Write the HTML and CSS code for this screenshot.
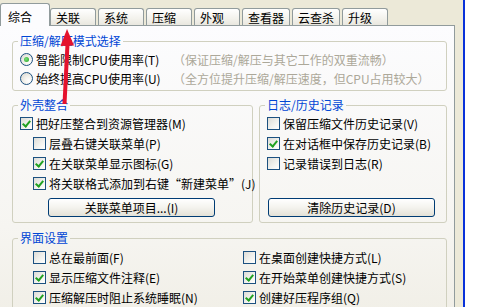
FILE: index.html
```html
<!DOCTYPE html>
<html>
<head>
<meta charset="utf-8">
<link rel="stylesheet" href="styles.css">
</head>
<body>
<div class="screen">
  <div class="dialog">
    <div class="tabs">
      <div class="tab active">综合</div>
      <div class="tab">关联</div>
      <div class="tab">系统</div>
      <div class="tab">压缩</div>
      <div class="tab">外观</div>
      <div class="tab">查看器</div>
      <div class="tab">云查杀</div>
      <div class="tab">升级</div>
    </div>
    <div class="panel">
      <fieldset class="group g-mode">
        <legend>压缩/解压模式选择</legend>
        <div class="row">
          <span class="radio on"></span><span class="rlabel">智能限制CPU使用率(T)</span><span class="hint">（保证压缩/解压与其它工作的双重流畅）</span>
        </div>
        <div class="row">
          <span class="radio"></span><span class="rlabel">始终提高CPU使用率(U)</span><span class="hint">（全方位提升压缩/解压速度，但CPU占用较大）</span>
        </div>
      </fieldset>

      <div class="two-col">
        <fieldset class="group g-shell">
          <legend>外壳整合</legend>
          <div class="row"><span class="cb on"></span><span>把好压整合到资源管理器(M)</span></div>
          <div class="row sub"><span class="cb"></span><span>层叠右键关联菜单(P)</span></div>
          <div class="row sub"><span class="cb on"></span><span>在关联菜单显示图标(G)</span></div>
          <div class="row sub"><span class="cb on"></span><span>将关联格式添加到右键“新建菜单”(J)</span></div>
          <div class="btn btn-left">关联菜单项目...(I)</div>
        </fieldset>
        <fieldset class="group g-log">
          <legend>日志/历史记录</legend>
          <div class="row"><span class="cb"></span><span>保留压缩文件历史记录(V)</span></div>
          <div class="row"><span class="cb on"></span><span>在对话框中保存历史记录(B)</span></div>
          <div class="row"><span class="cb"></span><span>记录错误到日志(R)</span></div>
          <div class="btn btn-right">清除历史记录(D)</div>
        </fieldset>
      </div>

      <fieldset class="group g-ui">
        <legend>界面设置</legend>
        <div class="ui-grid">
          <div class="row"><span class="cb"></span><span>总在最前面(F)</span></div>
          <div class="row"><span class="cb"></span><span>在桌面创建快捷方式(L)</span></div>
          <div class="row"><span class="cb on"></span><span>显示压缩文件注释(E)</span></div>
          <div class="row"><span class="cb on"></span><span>在开始菜单创建快捷方式(S)</span></div>
          <div class="row"><span class="cb on"></span><span>压缩解压时阻止系统睡眠(N)</span></div>
          <div class="row"><span class="cb on"></span><span>创建好压程序组(Q)</span></div>
        </div>
      </fieldset>
    </div>
  </div>
  <div class="frame"></div>
  <div class="outside"></div>
</div>
<svg class="arrow" width="495" height="307" viewBox="0 0 495 307">
  <line x1="64.5" y1="104" x2="67.5" y2="44" stroke="#E5122D" stroke-width="4"/>
  <polygon points="67,29 60.5,46 74,45.5" fill="#E5122D"/>
</svg>
</body>
</html>
```

FILE: styles.css
```css
* { box-sizing: border-box; }
html, body {
  margin: 0;
  padding: 0;
  width: 495px;
  height: 307px;
  overflow: hidden;
  background: #ECE9D8;
  font-family: "Noto Sans CJK SC", "Liberation Sans", sans-serif;
  font-size: 12px;
  color: #000;
}
.screen {
  display: flex;
  width: 495px;
  height: 307px;
}
.dialog {
  width: 463px;
  flex: none;
  background: #ECE9D8;
  padding-top: 3px;
}
.frame {
  width: 2px;
  flex: none;
  background: #0831D9;
}
.outside {
  flex: 1;
  background: #FFFFFF;
}

/* tabs */
.tabs {
  display: flex;
  align-items: flex-end;
  height: 22px;
  padding-left: 2px;
  gap: 2px;
}
.tab {
  min-width: 46px;
  height: 17px;
  padding: 1px 5px 0;
  line-height: 15px;
  border: 1px solid #919B9C;
  border-bottom: none;
  border-radius: 3px 3px 0 0;
  background: linear-gradient(#FFFFFF, #F3F2EC 60%, #E9E7DF);
  white-space: nowrap;
}
.tab.active {
  position: relative;
  z-index: 2;
  min-width: 50px;
  height: 23px;
  margin: 0 -2px -1px -2px;
  padding: 5px 7px 0;
  border-top: 1px solid #919B9C;
  background: #FCFCFE;
}

/* panel */
.panel {
  margin-left: -1px;
  width: 456px;
  height: 290px;
  border: 1px solid #919B9C;
  background: linear-gradient(#FCFCFE, #F6F5F1 70%, #F1EFE7);
  padding: 8px 7px 0 12px;
}

.group {
  margin: 0;
  min-width: 0;
  border: 1px solid #D0D0BF;
  border-radius: 3px;
  padding: 0 7px;
}
.group legend {
  color: #0046D5;
  line-height: 14px;
  padding: 0 2px;
  margin-left: -2px;
}
.g-mode { padding-top: 2px; padding-bottom: 2px; }
.g-mode .row { height: 19px; }

.row {
  display: flex;
  align-items: center;
  height: 20px;
  white-space: nowrap;
}
.row.sub { margin-left: 13px; }

.radio {
  width: 13px;
  height: 13px;
  flex: none;
  border-radius: 50%;
  border: 1px solid #1C5180;
  background: radial-gradient(circle at 70% 70%, #FFFFFF 0%, #F2F1EC 40%, #D6D5CE 100%);
  margin-right: 3px;
  display: flex;
  align-items: center;
  justify-content: center;
}
.radio.on::after {
  content: "";
  width: 5px;
  height: 5px;
  border-radius: 50%;
  background: radial-gradient(circle at 40% 40%, #7BE07A, #21A121);
}
.rlabel { width: 137px; flex: none; }
.hint { color: #ACA899; }

.cb {
  width: 13px;
  height: 13px;
  flex: none;
  border: 1px solid #1C5180;
  background: linear-gradient(135deg, #DCDCD7 0%, #F3F3EF 60%, #FFFFFF 100%);
  margin-right: 3px;
  position: relative;
}
.cb.on::after {
  content: "";
  position: absolute;
  left: 3px;
  top: 1px;
  width: 3px;
  height: 6px;
  border: solid #21A121;
  border-width: 0 2px 2px 0;
  transform: rotate(40deg);
}

.two-col {
  display: grid;
  grid-template-columns: 241px 188px;
  column-gap: 6px;
  margin-top: 7px;
}
.g-shell, .g-log {
  padding-top: 1px;
  padding-bottom: 5px;
  display: flex;
  flex-direction: column;
}
.btn {
  height: 19px;
  width: 167px;
  border: 1px solid #003C74;
  border-radius: 3px;
  background: linear-gradient(#FFFFFF, #F4F3EE 50%, #E3E1D7);
  text-align: center;
  line-height: 17px;
  margin-top: 5px;
}
.btn-left { margin-left: 28px; }
.btn-right { margin-left: 1px; margin-top: auto; }

.g-ui {
  margin-top: 8px;
  padding-top: 2px;
  padding-bottom: 4px;
}
.ui-grid {
  display: grid;
  grid-template-columns: 210px 1fr;
  margin-left: 13px;
}

.arrow {
  position: absolute;
  left: 0;
  top: 0;
  pointer-events: none;
}
```
